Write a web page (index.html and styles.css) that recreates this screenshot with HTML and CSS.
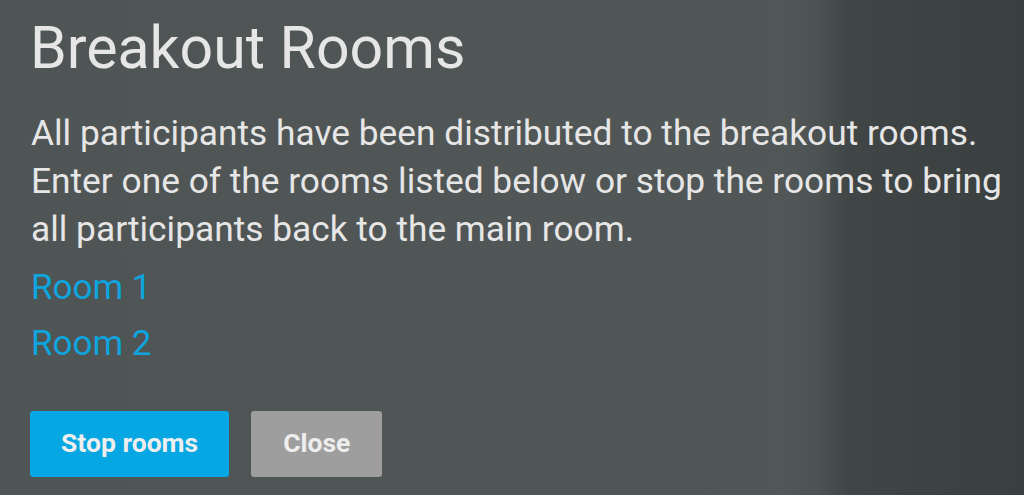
FILE: index.html
```html
<!DOCTYPE html>
<html lang="en">
<head>
    <meta charset="UTF-8">
    <meta name="viewport" content="width=device-width, initial-scale=1.0">
    <title>Breakout Rooms</title>
    <link rel="stylesheet" href="styles.css">
</head>
<body>
    <div id="dialog">
        <h1>Breakout Rooms</h1>
        <p class="info">All participants have been distributed to the breakout rooms. Enter one of the rooms listed below or stop the rooms to bring all participants back to the main room.</p>
        <ul class="rooms">
            <li><a href="#">Room 1</a></li>
            <li><a href="#">Room 2</a></li>
        </ul>
        <div class="actions">
            <button class="btn-primary">Stop rooms</button>
            <button class="btn-close">Close</button>
        </div>
    </div>
</body>
</html>
```

FILE: styles.css
```css
html, body {
    height: 100%;
}

body {
    font-family: Roboto, "Liberation Sans", sans-serif;
    margin: 0;
    padding: 0;
    color: #e6e6e6;
    background: linear-gradient(to right, #4f5454 0%, #515656 77%, #4c5252 80%, #404545 83%, #3d4242 90%, #3a3f3f 100%);
    overflow: hidden;
}

#dialog {
    padding: 13px 12px 0 31px;
}

h1 {
    margin: 0;
    font-size: 59px;
    font-weight: 400;
    line-height: normal;
    margin-left: -1px;
}

.info {
    margin: 27px 0 0;
    font-size: 35.3px;
    line-height: 48px;
}

.rooms {
    list-style: none;
    margin: 7px 0 0;
    padding: 0;
}

.rooms li {
    font-size: 35px;
    line-height: 56px;
}

.rooms a {
    color: #0ea5df;
    text-decoration: none;
}

.actions {
    display: flex;
    gap: 22px;
    margin-top: 39px;
    margin-left: -1px;
}

button {
    font-family: Roboto, "Liberation Sans", sans-serif;
    font-size: 26.5px;
    font-weight: 700;
    height: 66px;
    padding: 0 31px 4px;
    border: none;
    border-radius: 3px;
    color: #eeeeee;
    cursor: pointer;
}

.btn-primary {
    background-color: #06a7e2;
}

.btn-close {
    background-color: #9e9e9e;
    padding-left: 32px;
    padding-right: 32px;
}
```
